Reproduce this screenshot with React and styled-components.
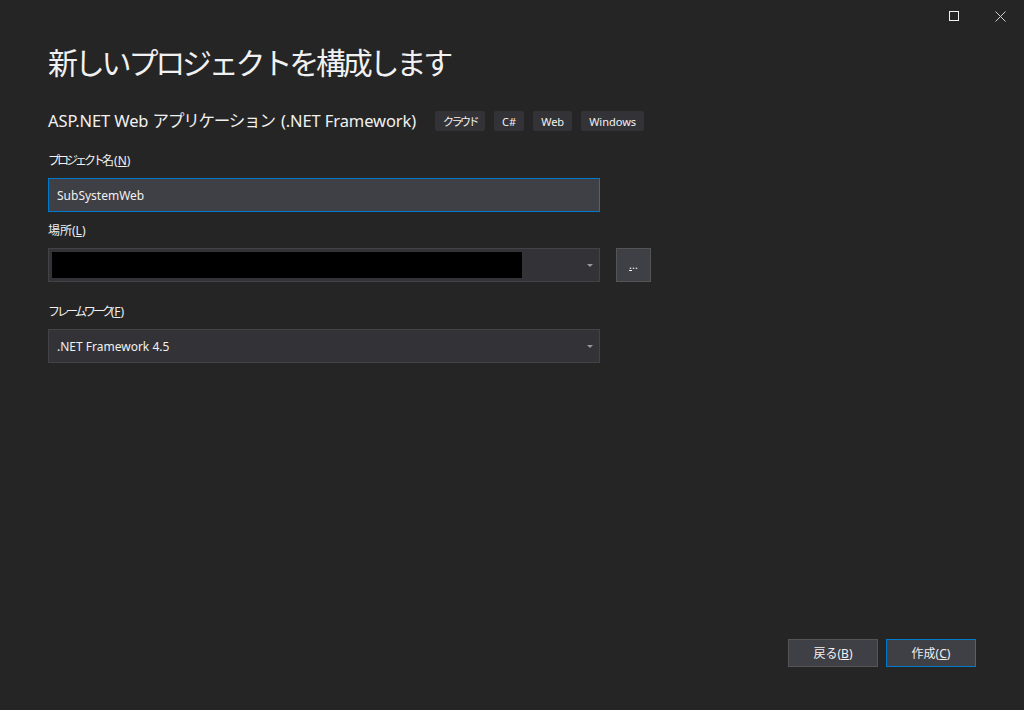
import React from 'react';
import styled, {createGlobalStyle} from 'styled-components';

const GlobalStyle = createGlobalStyle`
  html, body {
    margin: 0;
    padding: 0;
    background: #252526;
  }
  body {
    font-family: "Noto Sans", "Noto Sans CJK JP", sans-serif;
    color: #f1f1f1;
  }
`;

const Window = styled.div`
  width: 1024px;
  height: 710px;
  background: #252526;
  display: flex;
  flex-direction: column;
  overflow: hidden;
`;

const TitleBar = styled.div`
  height: 32px;
  display: flex;
  justify-content: flex-end;
`;

const WinButton = styled.div`
  width: 47px;
  height: 32px;
  display: flex;
  align-items: center;
  justify-content: center;
`;

const Content = styled.div`
  flex: 1;
  padding: 8px 0 0 48px;
  display: flex;
  flex-direction: column;
`;

const Title = styled.h1`
  margin: 0;
  font-family: "Noto Sans CJK JP", sans-serif;
  font-weight: 400;
  font-size: 30px;
  line-height: 42px;
  color: #f1f1f1;
  letter-spacing: -3.2px;
`;

const SubRow = styled.div`
  display: flex;
  align-items: center;
  margin-top: 27px;
  gap: 9px;
`;

const SubTitle = styled.div`
  font-size: 16.5px;
  line-height: 24px;
  color: #f1f1f1;
  margin-right: 10px;
  letter-spacing: -0.1px;
`;

// compact kana, the way the UI font draws katakana narrower
const Kana = styled.span`
  letter-spacing: ${({squeeze}) => squeeze}px;
  margin-right: ${({after}) => after || 0}px;
`;

const Tag = styled.span`
  background: #333337;
  border-radius: 2px;
  height: 20px;
  padding: 0 ${({pad}) => pad || 8}px;
  display: inline-flex;
  align-items: center;
  font-size: 11px;
  color: #f1f1f1;
`;

const Label = styled.div`
  font-size: 12px;
  line-height: 16px;
  color: #f1f1f1;
  margin-top: ${({top}) => top}px;
  margin-bottom: 9px;
`;

const FieldRow = styled.div`
  display: flex;
  align-items: center;
  gap: 16px;
`;

const TextBox = styled.div`
  width: 552px;
  height: 34px;
  box-sizing: border-box;
  background: #3f3f46;
  border: 1px solid #007acc;
  display: flex;
  align-items: center;
  padding-left: 8px;
  font-size: 12px;
  color: #f1f1f1;
`;

const Combo = styled.div`
  width: 552px;
  height: 34px;
  box-sizing: border-box;
  background: #333337;
  border: 1px solid #434346;
  display: flex;
  align-items: center;
  padding: 0 6px 0 ${({pad}) => pad}px;
  font-size: 12px;
  color: #f1f1f1;
`;

const ComboText = styled.div`
  flex: 1;
  display: flex;
  align-items: center;
`;

const Redacted = styled.div`
  width: 470px;
  height: 26px;
  background: #000;
`;

const Arrow = styled.span`
  width: 0;
  height: 0;
  border-left: 3px solid transparent;
  border-right: 3px solid transparent;
  border-top: 3px solid #999999;
`;

const BrowseButton = styled.div`
  width: 35px;
  height: 34px;
  box-sizing: border-box;
  background: #3f3f46;
  border: 1px solid #555555;
  display: flex;
  align-items: flex-end;
  justify-content: center;
  font-size: 11px;
  line-height: 11px;
  color: #f1f1f1;
  padding-bottom: 11px;
  u { text-decoration: underline; }
`;

const Footer = styled.div`
  display: flex;
  justify-content: flex-end;
  gap: 8px;
  padding: 0 48px 43px 0;
`;

const Button = styled.div`
  width: 90px;
  height: 28px;
  box-sizing: border-box;
  background: #3f3f46;
  border: 1px solid ${({primary}) => (primary ? '#007acc' : '#555555')};
  display: flex;
  align-items: center;
  justify-content: center;
  font-size: 12px;
  color: #f1f1f1;
`;

const App = () => {
  return <Window>
    <GlobalStyle/>
    <TitleBar>
      <WinButton>
        <svg width="10" height="10" viewBox="0 0 10 10">
          <rect x="0.5" y="0.5" width="9" height="9" fill="none" stroke="#f1f1f1" strokeWidth="1"/>
        </svg>
      </WinButton>
      <WinButton>
        <svg width="11" height="11" viewBox="0 0 11 11">
          <path d="M0.5 0.5 L10.5 10.5 M10.5 0.5 L0.5 10.5" stroke="#d0d0d0" strokeWidth="1"/>
        </svg>
      </WinButton>
    </TitleBar>
    <Content>
      <Title>新しいプロジェクトを構成します</Title>
      <SubRow>
        <SubTitle>ASP.NET Web <Kana squeeze={-1.2} after={2}>アプリケーション</Kana> (.NET Framework)</SubTitle>
        <Tag pad={8}><Kana squeeze={-2.5}>クラウド</Kana></Tag>
        <Tag>C#</Tag>
        <Tag>Web</Tag>
        <Tag>Windows</Tag>
      </SubRow>

      <Label top={20}><Kana squeeze={-3}>プロジェクト</Kana>名(<u>N</u>)</Label>
      <TextBox>SubSystemWeb</TextBox>

      <Label top={11}>場所(<u>L</u>)</Label>
      <FieldRow>
        <Combo pad={3}>
          <ComboText><Redacted/></ComboText>
          <Arrow/>
        </Combo>
        <BrowseButton><span><u>.</u>..</span></BrowseButton>
      </FieldRow>

      <Label top={22}><Kana squeeze={-3}>フレームワーク</Kana>(<u>F</u>)</Label>
      <Combo pad={8}>
        <ComboText>.NET Framework 4.5</ComboText>
        <Arrow/>
      </Combo>
    </Content>
    <Footer>
      <Button>戻る(<u>B</u>)</Button>
      <Button primary>作成(<u>C</u>)</Button>
    </Footer>
  </Window>;
};

export default App;
